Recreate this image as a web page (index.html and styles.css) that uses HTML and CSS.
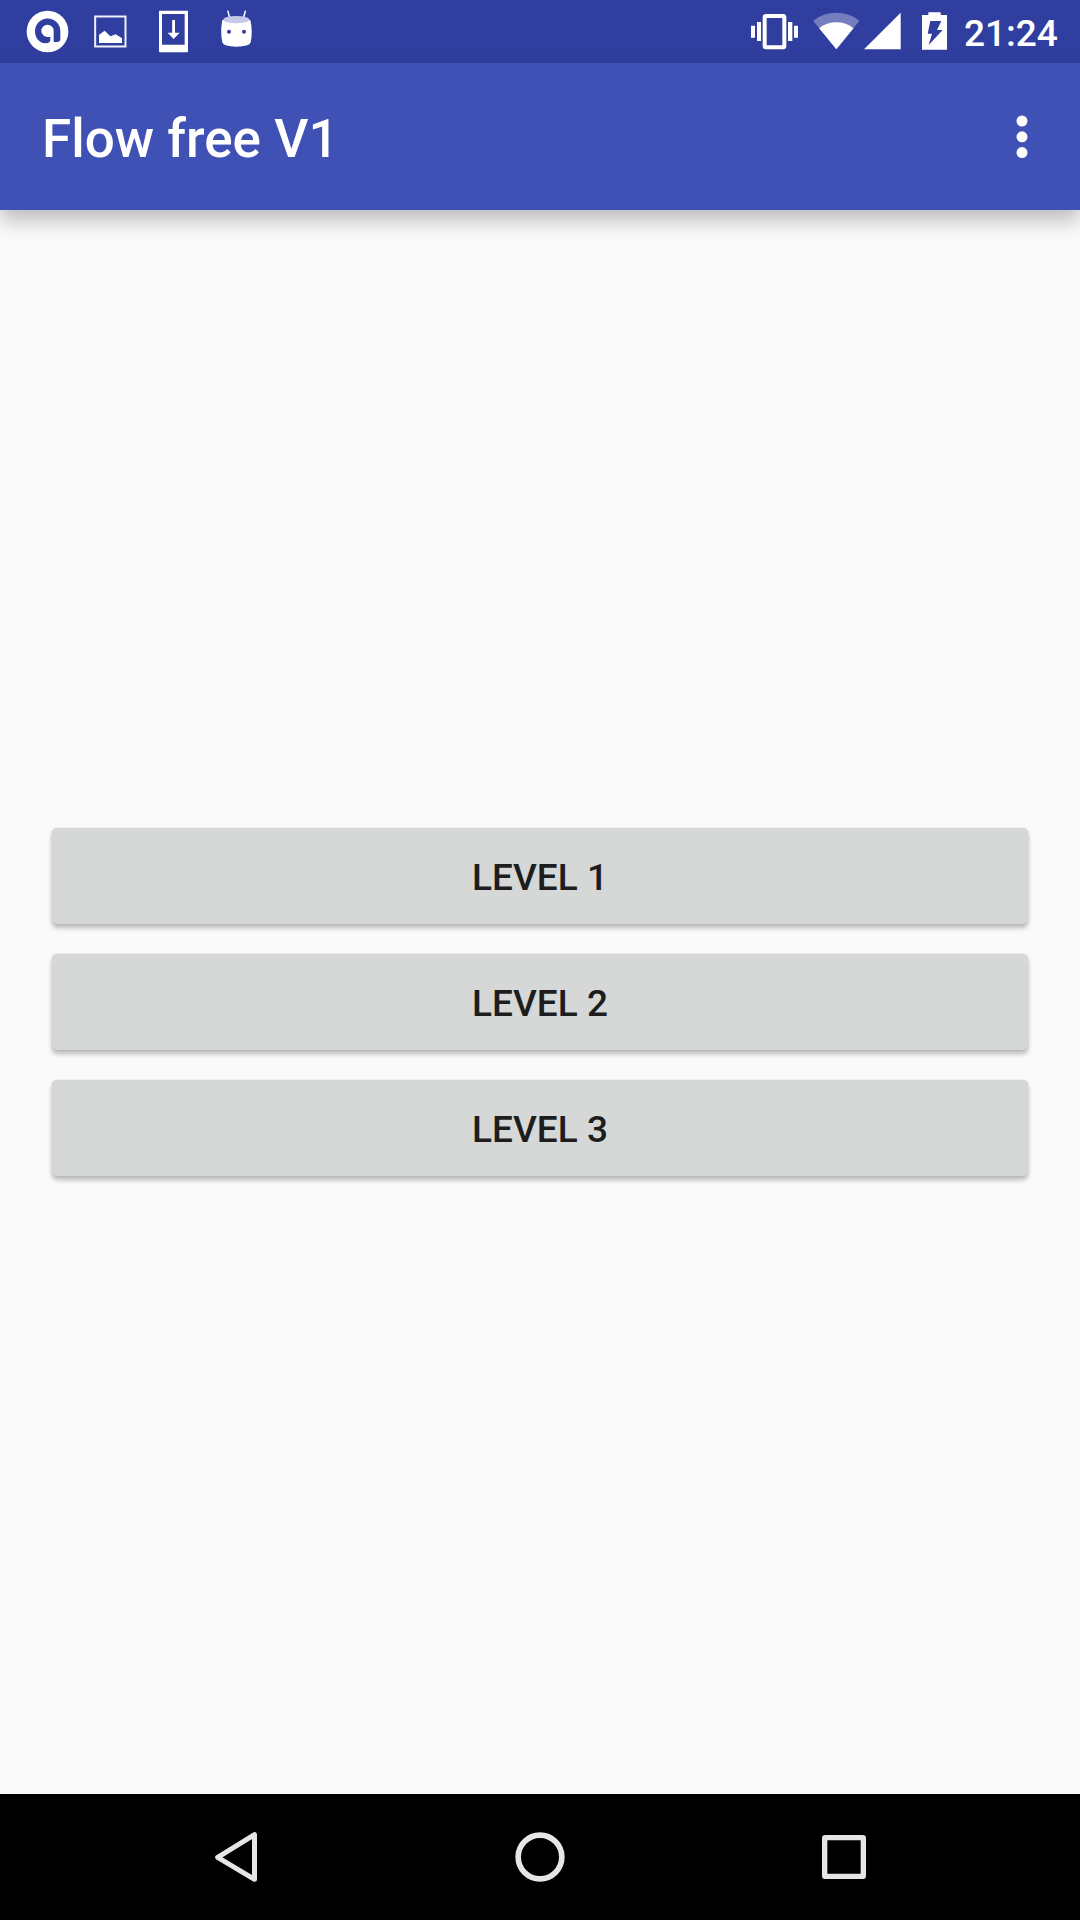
FILE: index.html
```html
<!DOCTYPE html>
<html lang="en">
<head>
<meta charset="utf-8">
<title>Flow free V1</title>
<link rel="stylesheet" href="styles.css">
</head>
<body>
<div class="screen">
  <div class="status-bar">
    <div class="notifications">
      <svg class="notification" viewBox="48 0 189 189">
        <circle cx="142.500" cy="94.500" r="62.500" fill="#fff"/>
        <path d="M181 93V117Q181 126 171 126H162L152 122Q146 130 136 130C117 129 105 113 105 94A38 38 0 0 1 181 93Z" fill="#303f9f"/>
        <path d="M161 93V128H151V111H143A18.500 18.500 0 1 1 161 93Z" fill="#fff"/>
      </svg>
      <svg class="notification" viewBox="237 0 189 189">
        <rect x="285.500" y="49.500" width="91" height="90" fill="none" stroke="#f0f1f8" stroke-width="6"/>
        <path d="M297 129V104L314 92L331 109L347 103L366 115V129Z" fill="#fff"/>
      </svg>
      <svg class="notification" viewBox="6 0 189 189">
        <path fill="#fff" fill-rule="evenodd" d="M59 32H142L144 34V155L142 157H59L57 155V34ZM66 42V134H134V42Z"/>
        <path fill="#fff" d="M96.500 60H105V98H119L101 117L83 98H96.500Z"/>
      </svg>
      <svg class="notification" viewBox="195 0 189 189">
        <path d="M264 34L269 54M316 34L310 54" stroke="#fff" stroke-width="4.500" stroke-linecap="round"/>
        <path d="M247 60Q240 95 247 127Q251 140 289 140Q328 140 332 127Q339 95 331 60Z" fill="#fff"/>
        <ellipse cx="289" cy="59" rx="39" ry="11" fill="#c5cae9"/>
        <circle cx="267" cy="95" r="6" fill="#303f9f"/>
        <circle cx="312" cy="95" r="6" fill="#303f9f"/>
      </svg>
    </div>
    <div class="system">
      <svg class="vibrate" viewBox="63 0 141 189">
        <rect x="104" y="48" width="59" height="94" rx="4" fill="none" stroke="#fff" stroke-width="12"/>
        <path d="M63 77h12v36h-12zM81 66h12v57h-12zM174 66h13v57h-13zM192 77h12v36h-12z" fill="#fff"/>
      </svg>
      <svg class="wifi" viewBox="248 0 140 189">
        <path d="M318 148L248.500 62Q279 38.500 318 38.500T387.500 62Z" fill="#747dbd"/>
        <path d="M318 148L266.500 84.500Q289 67 318 67T369.500 84.500Z" fill="#fff"/>
      </svg>
      <svg class="signal" viewBox="401 0 111 189">
        <path d="M401 148L511 38V148Z" fill="#fff"/>
      </svg>
      <svg class="battery" viewBox="66 0 75 189">
        <path d="M66 45H85V37H122V45H141V149H66Z" fill="#fff"/>
        <path d="M91 63H124L111 90H128L86 135L96 101H83Z" fill="#303f9f"/>
      </svg>
      <span class="clock">21:24</span>
    </div>
  </div>
  <header class="app-bar">
    <h1 class="title">Flow free V1</h1>
    <svg class="overflow" viewBox="0 0 12 44">
      <circle cx="6" cy="6" r="5.500"/><circle cx="6" cy="21.800" r="5.500"/><circle cx="6" cy="37.600" r="5.500"/>
    </svg>
  </header>
  <main class="levels">
    <button class="level">LEVEL 1</button>
    <button class="level">LEVEL 2</button>
    <button class="level">LEVEL 3</button>
  </main>
  <nav class="nav-bar">
    <svg class="nav-icon" viewBox="-84 42 384 378">
      <path d="M53 232L163.500 164V298Z" stroke-width="15"/>
    </svg>
    <svg class="nav-icon" viewBox="828 42 384 378">
      <circle cx="1020" cy="231" r="65.500" stroke-width="17"/>
    </svg>
    <svg class="nav-icon" viewBox="0 42 384 378">
      <rect x="134" y="173" width="116" height="116" rx="2" stroke-width="16"/>
    </svg>
  </nav>
</div>
</body>
</html>
```
FILE: styles.css
```css
body {
  margin: 0;
  font-family: Roboto, "Noto Sans", sans-serif;
}

.screen {
  display: flex;
  flex-direction: column;
  width: 1080px;
  height: 1920px;
  background: #fafafa;
  overflow: hidden;
}

.status-bar {
  display: flex;
  justify-content: space-between;
  height: 63px;
  padding: 0 0 0 16px;
  background: #303f9f;
}

.notifications,
.system {
  display: flex;
}

.notification {
  width: 63px;
  height: 63px;
}

.vibrate {
  width: 47px;
  height: 63px;
  margin-right: 15px;
}

.wifi {
  width: 46.67px;
  height: 63px;
  margin-right: 4.33px;
}

.signal {
  width: 37px;
  height: 63px;
  margin-right: 21px;
}

.battery {
  width: 25px;
  height: 63px;
  margin-right: 17px;
}

.clock {
  width: 116px;
  color: #fff;
  font-size: 37px;
  font-weight: 500;
  line-height: 67px;
}

.system {
  width: 329px;
}

.app-bar {
  display: flex;
  align-items: center;
  justify-content: space-between;
  height: 147px;
  padding: 0 52px 0 42px;
  box-sizing: border-box;
  background: #3f51b5;
  box-shadow: 0 10px 20px rgba(0, 0, 0, 0.26);
}

.title {
  margin: 0;
  padding-top: 5px;
  color: #fff;
  font-size: 53px;
  font-weight: 500;
  line-height: 62px;
}

.overflow {
  width: 12px;
  height: 44px;
  fill: #fff;
}

.levels {
  display: flex;
  flex: 1;
  flex-direction: column;
  gap: 30px;
  padding: 618px 52px 0;
}

.level {
  height: 96px;
  padding: 2px 0 0;
  border: 0;
  border-radius: 5px;
  background: #d6d8d7;
  box-shadow: 0 4px 5px rgba(0, 0, 0, 0.26), 0 0 2px rgba(0, 0, 0, 0.12);
  color: #1d1d1d;
  font: 500 37px/43px Roboto, "Noto Sans", sans-serif;
}

.system svg,
.clock {
  flex-shrink: 0;
}

.nav-bar {
  display: flex;
  justify-content: space-between;
  height: 126px;
  padding: 0 172px;
  background: #000;
}

.nav-icon {
  width: 128px;
  height: 126px;
  fill: none;
  stroke: #e6e6e6;
  stroke-linejoin: round;
}
```
